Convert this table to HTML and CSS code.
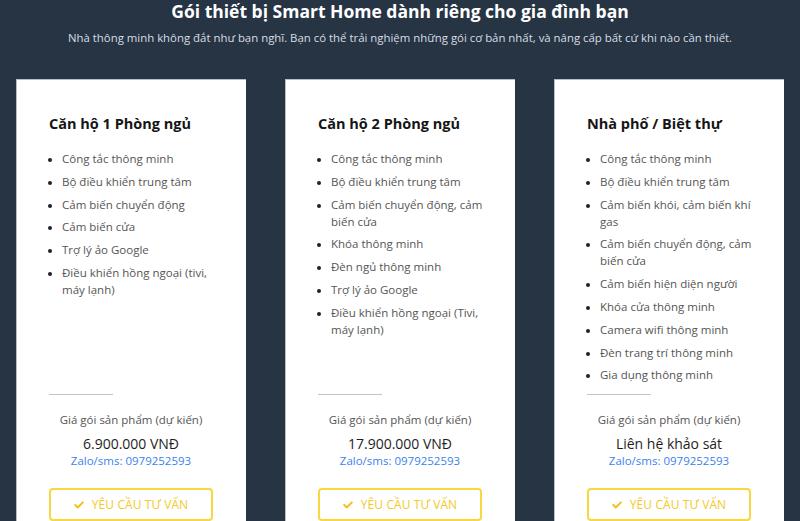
FILE: index.html
```html
<!DOCTYPE html>
<html lang="vi">
<head>
<meta charset="utf-8">
<link rel="stylesheet" href="styles.css">
</head>
<body>
<section class="pricing">
  <h1 class="title">Gói thiết bị Smart Home dành riêng cho gia đình bạn</h1>
  <p class="subtitle">Nhà thông minh không đắt như bạn nghĩ. Bạn có thể trải nghiệm những gói cơ bản nhất, và nâng cấp bất cứ khi nào cần thiết.</p>
  <div class="cards">
    <div class="card">
      <h3 class="card-title">Căn hộ 1 Phòng ngủ</h3>
      <ul class="features">
        <li>Công tắc thông minh</li>
        <li>Bộ điều khiển trung tâm</li>
        <li>Cảm biến chuyển động</li>
        <li>Cảm biến cửa</li>
        <li>Trợ lý ảo Google</li>
        <li>Điều khiển hồng ngoại (tivi, máy lạnh)</li>
      </ul>
      <div class="footer">
        <hr class="divider">
        <p class="price-label">Giá gói sản phẩm (dự kiến)</p>
        <p class="price">6.900.000 VNĐ</p>
        <p class="contact">Zalo/sms: 0979252593</p>
        <a class="btn" href="#"><svg class="check" viewBox="0 0 512 512"><path d="M173.9 439.4 7.5 273c-10-10-10-26.2 0-36.2l36.2-36.2c10-10 26.2-10 36.2 0L192 312.7 432.1 72.6c10-10 26.2-10 36.2 0l36.2 36.2c10 10 10 26.2 0 36.2L210.1 439.4c-10 10-26.2 10-36.2 0z"/></svg>YÊU CẦU TƯ VẤN</a>
      </div>
    </div>
    <div class="card">
      <h3 class="card-title">Căn hộ 2 Phòng ngủ</h3>
      <ul class="features">
        <li>Công tắc thông minh</li>
        <li>Bộ điều khiển trung tâm</li>
        <li>Cảm biến chuyển động, cảm biến cửa</li>
        <li>Khóa thông minh</li>
        <li>Đèn ngủ thông minh</li>
        <li>Trợ lý ảo Google</li>
        <li>Điều khiển hồng ngoại (Tivi, máy lạnh)</li>
      </ul>
      <div class="footer">
        <hr class="divider">
        <p class="price-label">Giá gói sản phẩm (dự kiến)</p>
        <p class="price">17.900.000 VNĐ</p>
        <p class="contact">Zalo/sms: 0979252593</p>
        <a class="btn" href="#"><svg class="check" viewBox="0 0 512 512"><path d="M173.9 439.4 7.5 273c-10-10-10-26.2 0-36.2l36.2-36.2c10-10 26.2-10 36.2 0L192 312.7 432.1 72.6c10-10 26.2-10 36.2 0l36.2 36.2c10 10 10 26.2 0 36.2L210.1 439.4c-10 10-26.2 10-36.2 0z"/></svg>YÊU CẦU TƯ VẤN</a>
      </div>
    </div>
    <div class="card">
      <h3 class="card-title">Nhà phố / Biệt thự</h3>
      <ul class="features">
        <li>Công tắc thông minh</li>
        <li>Bộ điều khiển trung tâm</li>
        <li>Cảm biến khói, cảm biến khí gas</li>
        <li>Cảm biến chuyển động, cảm biến cửa</li>
        <li>Cảm biến hiện diện người</li>
        <li>Khóa cửa thông minh</li>
        <li>Camera wifi thông minh</li>
        <li>Đèn trang trí thông minh</li>
        <li>Gia dụng thông minh</li>
      </ul>
      <div class="footer">
        <hr class="divider">
        <p class="price-label">Giá gói sản phẩm (dự kiến)</p>
        <p class="price">Liên hệ khảo sát</p>
        <p class="contact">Zalo/sms: 0979252593</p>
        <a class="btn" href="#"><svg class="check" viewBox="0 0 512 512"><path d="M173.9 439.4 7.5 273c-10-10-10-26.2 0-36.2l36.2-36.2c10-10 26.2-10 36.2 0L192 312.7 432.1 72.6c10-10 26.2-10 36.2 0l36.2 36.2c10 10 10 26.2 0 36.2L210.1 439.4c-10 10-26.2 10-36.2 0z"/></svg>YÊU CẦU TƯ VẤN</a>
      </div>
    </div>
  </div>
</section>
</body>
</html>
```

FILE: styles.css
```css
* { box-sizing: border-box; }
html, body {
  margin: 0;
  padding: 0;
  background: #263444;
  overflow: hidden;
}
.pricing {
  padding: 0 16px;
  font-family: "Open Sans", "Liberation Sans", sans-serif;
}
.title {
  margin: 0;
  text-align: center;
  color: #ffffff;
  font-size: 17.5px;
  line-height: 23px;
  font-weight: 700;
}
.subtitle {
  margin: 7px 0 0;
  text-align: center;
  color: #d9dde3;
  font-size: 11.4px;
  line-height: 16px;
}
.cards {
  margin-top: 33px;
  display: grid;
  grid-template-columns: repeat(3, 230px);
  column-gap: 39px;
}
.card {
  background: #ffffff;
  border-top: 1px solid #b8bec6;
  border-left: 1px solid #b8bec6;
  padding: 35px 33px 30px 32px;
  display: flex;
  flex-direction: column;
  font-family: "Open Sans", "Liberation Sans", sans-serif;
}
.card-title {
  margin: 0;
  font-size: 14.5px;
  line-height: 18px;
  font-weight: 700;
  color: #151515;
}
.features {
  margin: 17px -7px 0 0;
  padding-left: 13px;
  list-style: disc;
  color: #555555;
  font-size: 11.5px;
  line-height: 17px;
}
.features li {
  margin-bottom: 5.8px;
}
.features li::marker {
  color: #222;
  font-size: 10px;
}
.footer {
  margin-top: auto;
  padding-top: 5px;
  text-align: center;
}
.divider {
  width: 64px;
  margin: 0;
  border: 0;
  border-top: 1px solid #c4c4c4;
}
.price-label {
  margin: 16px 0 0;
  font-size: 11.5px;
  line-height: 17px;
  color: #555555;
}
.price {
  margin: 7px 0 0;
  font-size: 14px;
  line-height: 18px;
  font-weight: 500;
  color: #1e1e1e;
}
.contact {
  margin: 0;
  font-size: 11.5px;
  line-height: 15px;
  color: #3a82f0;
}
.btn {
  margin-top: 20px;
  height: 33px;
  display: flex;
  align-items: center;
  justify-content: center;
  gap: 8px;
  border: 2px solid #fad642;
  border-radius: 4px;
  color: #f4c929;
  font-size: 12px;
  text-decoration: none;
  letter-spacing: 0.1px;
}
.check {
  width: 10px;
  height: 10px;
  fill: #f4c020;
}
```
